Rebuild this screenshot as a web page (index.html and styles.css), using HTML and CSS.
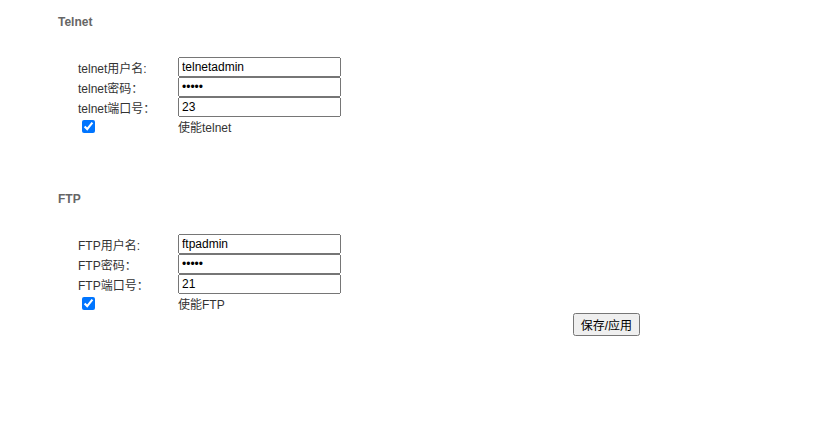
FILE: index.html
```html
<!DOCTYPE html>
<html lang="zh-CN">
<head>
<meta charset="utf-8">
<title>Telnet / FTP</title>
<link rel="stylesheet" href="styles.css">
</head>
<body>
<form class="settings">
  <section class="group">
    <h2 class="title">Telnet</h2>
    <div class="fields">
      <label for="tuser">telnet用户名:</label><input class="text" id="tuser" type="text" value="telnetadmin">
      <label for="tpass">telnet密码：</label><input class="text" id="tpass" type="password" value="admin">
      <label for="tport">telnet端口号：</label><input class="text" id="tport" type="text" value="23">
      <input class="check" id="ton" type="checkbox" checked><label for="ton">使能telnet</label>
    </div>
  </section>
  <section class="group">
    <h2 class="title">FTP</h2>
    <div class="fields">
      <label for="fuser">FTP用户名:</label><input class="text" id="fuser" type="text" value="ftpadmin">
      <label for="fpass">FTP密码：</label><input class="text" id="fpass" type="password" value="admin">
      <label for="fport">FTP端口号：</label><input class="text" id="fport" type="text" value="21">
      <input class="check" id="fon" type="checkbox" checked><label for="fon">使能FTP</label>
    </div>
  </section>
  <div class="actions"><button class="save" type="button">保存/应用</button></div>
</form>
</body>
</html>
```
FILE: styles.css
```css
body {
  margin: 0;
  background: #fff;
  color: #333;
  font: 12px/18px "Liberation Sans", "Noto Sans CJK SC", sans-serif;
}
.settings {
  padding: 13px 175px 0 58px;
}
.group {
  margin-bottom: 54px;
}
.group:last-of-type {
  margin-bottom: 0;
}
.title {
  margin: 0 0 26px;
  font-size: 12px;
  line-height: 18px;
  color: #666;
}
.fields {
  display: grid;
  grid-template-columns: 100px 1fr;
  grid-template-rows: repeat(3, 20px) 19px;
  padding-left: 20px;
}
.fields label {
  line-height: 22px;
  margin-top: 1px;
}
.fields .check + label {
  margin-top: 0;
}
.text {
  box-sizing: border-box;
  width: 163px;
  height: 20px;
  padding: 1px 2px;
  font: 12px "Liberation Sans", "Noto Sans CJK SC", sans-serif;
}
.check {
  width: 13px;
  height: 13px;
  margin: 3px 4px;
}
.actions {
  display: flex;
  justify-content: flex-end;
}
.save {
  height: 23px;
  padding: 1px 6px;
  font: 12px "Liberation Sans", "Noto Sans CJK SC", sans-serif;
}
```
